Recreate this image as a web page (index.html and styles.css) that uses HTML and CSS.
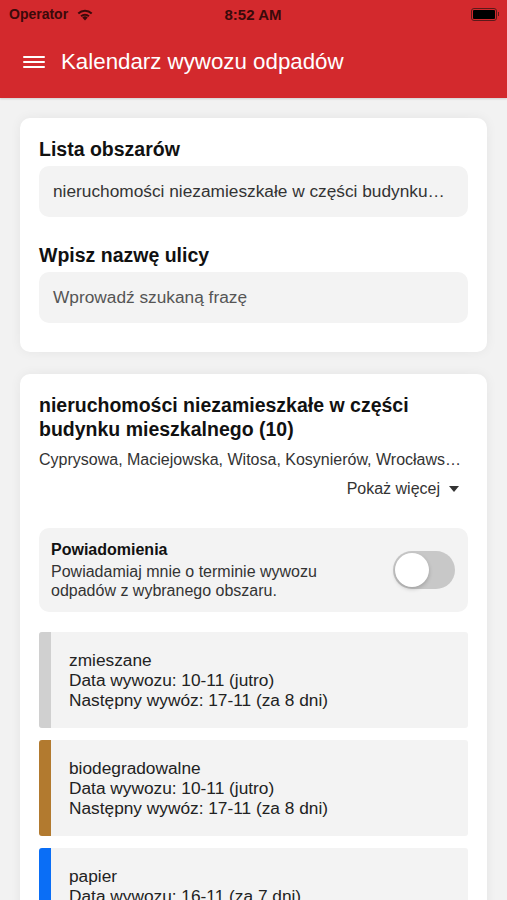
FILE: index.html
```html
<!DOCTYPE html>
<html lang="pl">
<head>
    <meta charset="UTF-8">
    <meta name="viewport" content="width=device-width, initial-scale=1.0">
    <title>Kalendarz wywozu odpadów</title>
    <link rel="stylesheet" href="styles.css">
</head>
<body>

<div class="topbar">
    <div class="status-bar">
        <div class="status-left">
            <span>Operator</span>
            <svg class="wifi" width="18" height="13" viewBox="0 0 18 13">
                <path d="M9 12.5 L6.3 9.6 A3.8 3.8 0 0 1 11.7 9.6 Z" fill="#3a0a0a"/>
                <path d="M4.4 7.6 A6.6 6.6 0 0 1 13.6 7.6 L12.2 9.1 A4.6 4.6 0 0 0 5.8 9.1 Z" fill="#3a0a0a"/>
                <path d="M1.6 4.8 A10.4 10.4 0 0 1 16.4 4.8 L15 6.3 A8.4 8.4 0 0 0 3 6.3 Z" fill="#3a0a0a"/>
            </svg>
        </div>
        <div class="status-time">8:52 AM</div>
        <div class="status-right">
            <div class="battery"><div class="battery-fill"></div></div>
        </div>
    </div>
    <div class="app-bar">
        <div class="menu-icon">
            <span></span><span></span><span></span>
        </div>
        <h1 class="app-title">Kalendarz wywozu odpadów</h1>
    </div>
</div>

<div class="content">
    <div class="card">
        <h2 class="card-label">Lista obszarów</h2>
        <div class="field">nieruchomości niezamieszkałe w części budynku…</div>
        <h2 class="card-label second">Wpisz nazwę ulicy</h2>
        <div class="field placeholder">Wprowadź szukaną frazę</div>
    </div>

    <div class="card area-card">
        <h2 class="area-title">nieruchomości niezamieszkałe w części budynku mieszkalnego (10)</h2>
        <div class="area-streets">Cyprysowa, Maciejowska, Witosa, Kosynierów, Wrocławs…</div>
        <div class="show-more">Pokaż więcej <span class="caret"></span></div>

        <div class="notify">
            <div class="notify-text">
                <div class="notify-title">Powiadomienia</div>
                <div class="notify-desc">Powiadamiaj mnie o terminie wywozu odpadów z wybranego obszaru.</div>
            </div>
            <div class="switch"><div class="knob"></div></div>
        </div>

        <div class="waste-list">
            <div class="waste">
                <div class="waste-bar mixed"></div>
                <div class="waste-info">
                    <div>zmieszane</div>
                    <div>Data wywozu: 10-11 (jutro)</div>
                    <div>Następny wywóz: 17-11 (za 8 dni)</div>
                </div>
            </div>
            <div class="waste">
                <div class="waste-bar bio"></div>
                <div class="waste-info">
                    <div>biodegradowalne</div>
                    <div>Data wywozu: 10-11 (jutro)</div>
                    <div>Następny wywóz: 17-11 (za 8 dni)</div>
                </div>
            </div>
            <div class="waste">
                <div class="waste-bar paper"></div>
                <div class="waste-info">
                    <div>papier</div>
                    <div>Data wywozu: 16-11 (za 7 dni)</div>
                    <div>Następny wywóz: 30-11 (za 21 dni)</div>
                </div>
            </div>
        </div>
    </div>
</div>

</body>
</html>
```

FILE: styles.css
```css
body {
    font-family: "Liberation Sans", Arial, sans-serif;
    background-color: #f2f2f2;
    margin: 0;
    padding: 0;
    color: #111;
}

.topbar {
    background-color: #d3292d;
    height: 98px;
    box-shadow: 0 1px 2px rgba(0, 0, 0, 0.15);
}

.status-bar {
    height: 28px;
    display: flex;
    align-items: center;
    justify-content: space-between;
    padding: 0 10px 0 9px;
    color: #3a0a0a;
    font-size: 14px;
    font-weight: bold;
}

.status-left {
    display: flex;
    align-items: center;
    gap: 8px;
    width: 120px;
}

.status-time {
    font-size: 15px;
}

.status-right {
    display: flex;
    justify-content: flex-end;
    width: 120px;
}

.battery {
    width: 22px;
    height: 9px;
    border: 1px solid #5a1a1a;
    border-radius: 3px;
    padding: 1px;
    position: relative;
}

.battery::after {
    content: "";
    position: absolute;
    right: -3px;
    top: 3px;
    width: 1px;
    height: 4px;
    background-color: #5a1a1a;
}

.battery-fill {
    width: 100%;
    height: 100%;
    background-color: #000;
    border-radius: 1px;
}

.app-bar {
    height: 70px;
    display: flex;
    align-items: center;
    padding-left: 23px;
    padding-bottom: 2px;
    box-sizing: border-box;
}

.menu-icon {
    display: flex;
    flex-direction: column;
    gap: 3px;
    width: 22px;
    margin-right: 16px;
}

.menu-icon span {
    display: block;
    height: 2px;
    background-color: #fff;
    border-radius: 1px;
}

.app-title {
    margin: 0;
    color: #fff;
    font-size: 22.3px;
    font-weight: normal;
}

.content {
    padding: 20px;
    display: flex;
    flex-direction: column;
    gap: 22px;
}

.card {
    background-color: #fff;
    border-radius: 10px;
    box-shadow: 0 0 12px rgba(0, 0, 0, 0.06);
    padding: 19px 19px 29px;
}

.card-label {
    margin: 0 0 5px;
    font-size: 19.5px;
    line-height: 24px;
    font-weight: bold;
}

.card-label.second {
    margin-top: 26px;
}

.field {
    background-color: #f3f3f3;
    border-radius: 10px;
    height: 51px;
    line-height: 51px;
    padding: 0 14px;
    font-size: 17.3px;
    color: #333;
    white-space: nowrap;
    overflow: hidden;
    text-overflow: ellipsis;
}

.field.placeholder {
    color: #555;
}

.area-title {
    margin: 0;
    font-size: 19.5px;
    line-height: 24px;
    font-weight: bold;
    padding-right: 30px;
}

.area-streets {
    margin-top: 10px;
    font-size: 16px;
    line-height: 18px;
    color: #333;
    white-space: nowrap;
    overflow: hidden;
    text-overflow: ellipsis;
}

.show-more {
    margin-top: 11px;
    display: flex;
    justify-content: flex-end;
    align-items: center;
    gap: 9px;
    font-size: 16px;
    line-height: 18px;
    color: #333;
    padding-right: 9px;
}

.caret {
    width: 0;
    height: 0;
    border-left: 5px solid transparent;
    border-right: 5px solid transparent;
    border-top: 6px solid #333;
}

.notify {
    margin-top: 30px;
    background-color: #f3f3f3;
    border-radius: 10px;
    padding: 12px 13px 12px 12px;
    display: flex;
    align-items: center;
    justify-content: space-between;
}

.notify-title {
    font-size: 16px;
    font-weight: bold;
    line-height: 19px;
}

.notify-desc {
    font-size: 16px;
    line-height: 19px;
    color: #333;
    width: 290px;
    margin-top: 3px;
}

.switch {
    width: 62px;
    height: 38px;
    border-radius: 19px;
    background-color: #c8c8c8;
    position: relative;
    flex-shrink: 0;
}

.knob {
    position: absolute;
    left: 2px;
    top: 2px;
    width: 34px;
    height: 34px;
    border-radius: 50%;
    background-color: #fff;
    box-shadow: 0 2px 4px rgba(0, 0, 0, 0.2);
}

.waste-list {
    margin-top: 20px;
    display: flex;
    flex-direction: column;
    gap: 12px;
}

.waste {
    display: flex;
    background-color: #f3f3f3;
    border-radius: 3px;
    overflow: hidden;
}

.waste-bar {
    width: 12px;
    flex-shrink: 0;
}

.waste-bar.mixed {
    background-color: #d0d0d0;
}

.waste-bar.bio {
    background-color: #b27a2f;
}

.waste-bar.paper {
    background-color: #0a6ef6;
}

.waste-info {
    padding: 18px 18px;
    font-size: 17.3px;
    line-height: 20px;
    color: #222;
}
```
